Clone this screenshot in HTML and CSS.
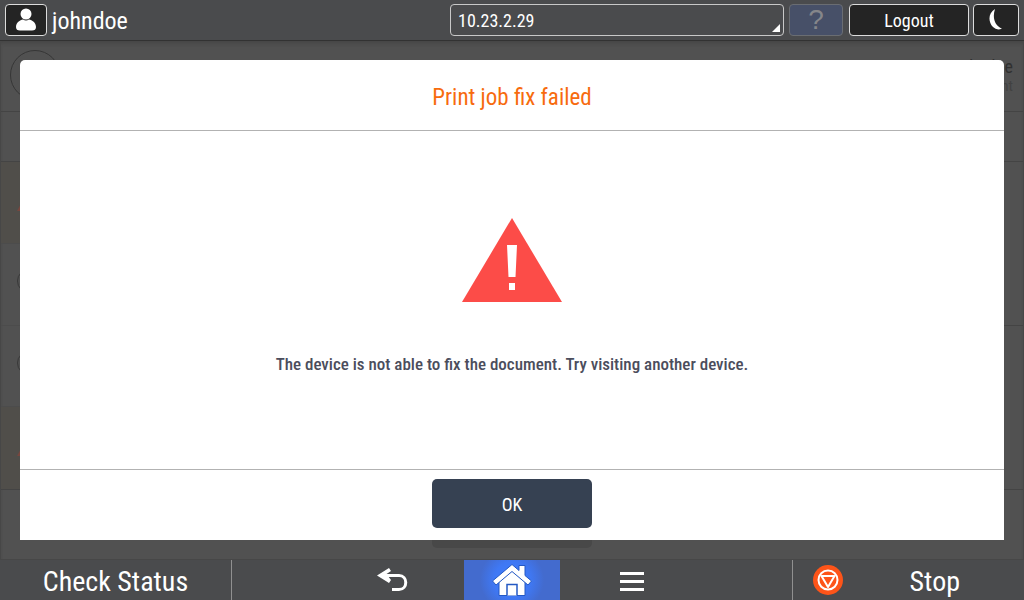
FILE: index.html
```
<!DOCTYPE html>
<html lang="en">
<head>
<meta charset="utf-8">
<meta name="viewport" content="width=device-width, initial-scale=1">
<title>Print job fix failed</title>
<link rel="stylesheet" href="styles.css">
</head>
<body>
<header class="topbar">
  <button class="key user-key" type="button" aria-label="User">
    <svg width="20" height="23" viewBox="0 0 20 23"><circle cx="10" cy="6" r="5.5"/><path d="M0 19C0 14.500 4 12 7 11.500Q10 13.500 13 11.500C16 12 20 14.500 20 19Q20 22.500 16 22.500H4Q0 22.500 0 19Z"/></svg>
  </button>
  <span class="username">johndoe</span>
  <div class="address">
    <select class="address-select" aria-label="Device address"><option>10.23.2.29</option></select>
    <svg class="address-corner" width="8" height="8" viewBox="0 0 8 8"><path d="M8 0V8H0Z"/></svg>
  </div>
  <button class="key help-key" type="button" aria-label="Help" disabled>?</button>
  <button class="key logout-key" type="button">Logout</button>
  <button class="key sleep-key" type="button" aria-label="Sleep">
    <svg width="14" height="21" viewBox="0 0 14 21"><path d="M6 0C-1 4 -1 13 4 18Q8 22 13 19.500C6 17 3 9 6 0Z"/></svg>
  </button>
</header>

<main class="stage">
  <div class="backdrop" aria-hidden="true">
    <div class="page-head">
      <span class="avatar"></span>
      <div class="account"><span class="account-name">johndoe</span><span class="account-kind">Account</span></div>
    </div>
    <div class="page-tabs"></div>
    <div class="page-columns">
      <div class="job-list">
        <div class="job failed"><svg width="22" height="20" viewBox="0 0 22 20"><path d="M11 0L22 20H0Z"/></svg></div>
        <div class="job"><span class="job-dot"></span></div>
        <div class="job"><span class="job-dot"></span></div>
        <div class="job failed"><svg width="22" height="20" viewBox="0 0 22 20"><path d="M11 0L22 20H0Z"/></svg></div>
      </div>
      <div class="details"><div class="detail"></div><div class="detail"></div></div>
    </div>
    <div class="page-foot"><span class="page-action"></span></div>
  </div>
  <section class="dialog" role="dialog" aria-labelledby="dialog-title">
    <h1 class="dialog-title" id="dialog-title">Print job fix failed</h1>
    <div class="dialog-body">
      <svg class="warning" width="100" height="84" viewBox="0 0 100 84"><path fill="#fc4c48" d="M50 0L100 84H0Z"/><path fill="#fff" d="M45 27H55L53.500 59H46.500ZM47 65H53V72H47Z"/></svg>
      <p class="message">The device is not able to fix the document. Try visiting another device.</p>
    </div>
    <div class="dialog-foot"><button class="ok" type="button">OK</button></div>
  </section>
</main>

<nav class="bottombar">
  <button class="nav-key status" type="button">Check Status</button>
  <div class="nav-center">
    <button class="nav-key" type="button" aria-label="Back">
      <svg width="32" height="24" viewBox="0 0 32 24"><path fill="#fff" d="M0 7.500L12 0L14 3L9.500 6L14 12L12 15Z"/><path fill="none" stroke="#fff" stroke-width="3" d="M6 7.500H22C31 7.500 31 21.500 22 21.500H15"/></svg>
    </button>
    <button class="nav-key home" type="button" aria-label="Home">
      <svg width="40" height="32" viewBox="0 0 40 32"><path fill="#fff" stroke="#2459c4" d="M7 18L20 6.500L33 18V31.500H7Z"/><path fill="#fff" stroke="#2459c4" d="M20 .5L27 6.500V1.500H33V11.500L39.500 17L36 21L20 7.500L4 21L.5 17Z"/><path fill="#fff" stroke="#2459c4" stroke-width="1.500" d="M15 31.500V20.500H25V31.500"/></svg>
    </button>
    <button class="nav-key" type="button" aria-label="Menu">
      <svg width="24" height="19" viewBox="0 0 24 19"><path fill="#fff" d="M0 0H24V3H0ZM0 8H24V11H0ZM0 16H24V19H0Z"/></svg>
    </button>
  </div>
  <button class="nav-key stop" type="button">
    <svg width="30" height="30" viewBox="0 0 30 30"><circle cx="15" cy="15" r="15" fill="#fd5419"/><g fill="none" stroke="#fff" stroke-width="2" stroke-linejoin="round"><circle cx="15" cy="15" r="9.500"/><path d="M8.500 11H21.500L15 22Z"/></g></svg>
    <span class="stop-label">Stop</span>
  </button>
</nav>
</body>
</html>
```
FILE: styles.css
```
* { box-sizing: border-box; }
body {
  margin: 0;
  min-height: 100vh;
  display: flex;
  flex-direction: column;
  background: #4a4b4d;
  color: #fff;
  font-family: "Roboto Condensed", "Noto Sans CJK JP", sans-serif;
}
button, select { font: inherit; color: inherit; margin: 0; }
svg { display: block; flex: none; }

.topbar {
  display: flex;
  align-items: center;
  gap: 5px;
  height: 41px;
  padding: 0 5px 1px;
  border-bottom: 1px solid #323232;
}
.key {
  display: flex;
  align-items: center;
  justify-content: center;
  height: 32px;
  padding: 0;
  border: 1px solid #dcdcdc;
  border-radius: 4px;
  background: #242424;
  font-size: 18px;
  line-height: 24px;
}
.key svg { fill: #fff; }
.user-key { width: 42px; }
.username { flex: 1; padding-top: 3px; font-size: 24px; line-height: 32px; }
.address { position: relative; flex: 0 1 334px; }
.address-select {
  display: block;
  width: 100%;
  height: 32px;
  padding: 2px 7px 0;
  appearance: none;
  border: 1px solid #c8c8c8;
  border-radius: 4px;
  background: transparent;
  font-size: 18px;
}
.address-corner { position: absolute; right: 4px; bottom: 4px; fill: #fff; }
.help-key { width: 54px; border-color: #6a6d72; background: #475068; color: #85868a; font-family: "Liberation Sans", sans-serif; font-size: 28px; }
.logout-key { width: 120px; margin-left: 1px; padding-top: 2px; }
.sleep-key { width: 46px; margin-left: -1px; }

.stage { flex: 1; display: grid; }
.backdrop, .dialog { grid-area: 1 / 1; min-width: 0; }
.backdrop {
  display: flex;
  flex-direction: column;
  background: #515151;
  border: 1px solid #474747;
  border-top: 0;
  box-shadow: inset 0 4px 4px -2px #444;
  color: #303030;
}
.page-head { display: flex; justify-content: space-between; height: 71px; padding: 9px 10px 0 9px; border-bottom: 1px solid #444; }
.avatar { width: 50px; height: 50px; border: 1px solid #363636; border-radius: 50%; }
.account { display: flex; flex-direction: column; align-items: flex-end; padding-top: 6px; }
.account-name { font-size: 18px; line-height: 22px; }
.account-kind { font-size: 15px; line-height: 16px; color: #424242; }
.page-tabs { height: 50px; border-bottom: 1px solid #444; }
.page-columns { display: grid; grid-template-columns: 1fr 1fr; height: 328px; border-bottom: 1px solid #444; }
.job-list { display: grid; grid-template-rows: repeat(4, 1fr); }
.details { display: flex; flex-direction: column; }
.job { padding: 25px 0 0 16px; border-bottom: 1px solid #4c4c4c; }
.job:last-child { border-bottom: 0; }
.job svg { fill: #78473f; }
.failed { padding-top: 29px; background: #504e4a; }
.job-dot { display: block; width: 24px; height: 24px; border: 1px solid #383838; border-radius: 50%; }
.detail { flex: 1; }
.detail + .detail { border-top: 1px solid #444; }
.page-foot { flex: 1; display: flex; align-items: flex-end; justify-content: center; padding-bottom: 11px; }
.page-action { width: 160px; height: 48px; border-radius: 5px; background: #484848; }

.dialog {
  display: flex;
  flex-direction: column;
  margin: 19px 20px 20px;
  border-radius: 5px 5px 0 0;
  background: #fff;
  color: #4b4d5c;
}
.dialog-title {
  margin: 0;
  padding: 22px 16px 16px;
  border-bottom: 1px solid #b2b2b2;
  color: #f76b0e;
  font-size: 23px;
  font-weight: 400;
  line-height: 32px;
  text-align: center;
}
.dialog-body { flex: 1; display: flex; flex-direction: column; align-items: center; justify-content: center; gap: 50px; padding: 0 16px 6px; }
.message { margin: 0; font-size: 17px; font-weight: 500; line-height: 24px; text-align: center; }
.dialog-foot { display: flex; justify-content: center; padding: 9px 16px 12px; border-top: 1px solid #b2b2b2; }
.ok { width: 160px; height: 49px; padding: 2px 0 0; border: 0; border-radius: 5px; background: #364152; color: #fff; font-size: 18px; }

.bottombar { display: grid; grid-template-columns: 232px 1fr 232px; height: 40px; }
.nav-key { display: flex; align-items: center; justify-content: center; padding: 0; border: 0; background: none; }
.status { padding-top: 3px; border-right: 1px solid #909090; font-size: 28px; line-height: 36px; }
.nav-center { display: grid; grid-template-columns: 1fr 96px 1fr; }
.nav-center .nav-key:first-child { padding-left: 90px; }
.nav-center .nav-key:last-child { padding: 2px 88px 0 0; }
.home { background: radial-gradient(circle, #3f7dff 0, #3f78f4 18px, #436bce 32px); }
.stop { justify-content: space-between; padding: 0 64px 0 20px; border-left: 1px solid #909090; font-size: 28px; line-height: 36px; }
.stop-label { padding-top: 3px; }
```
